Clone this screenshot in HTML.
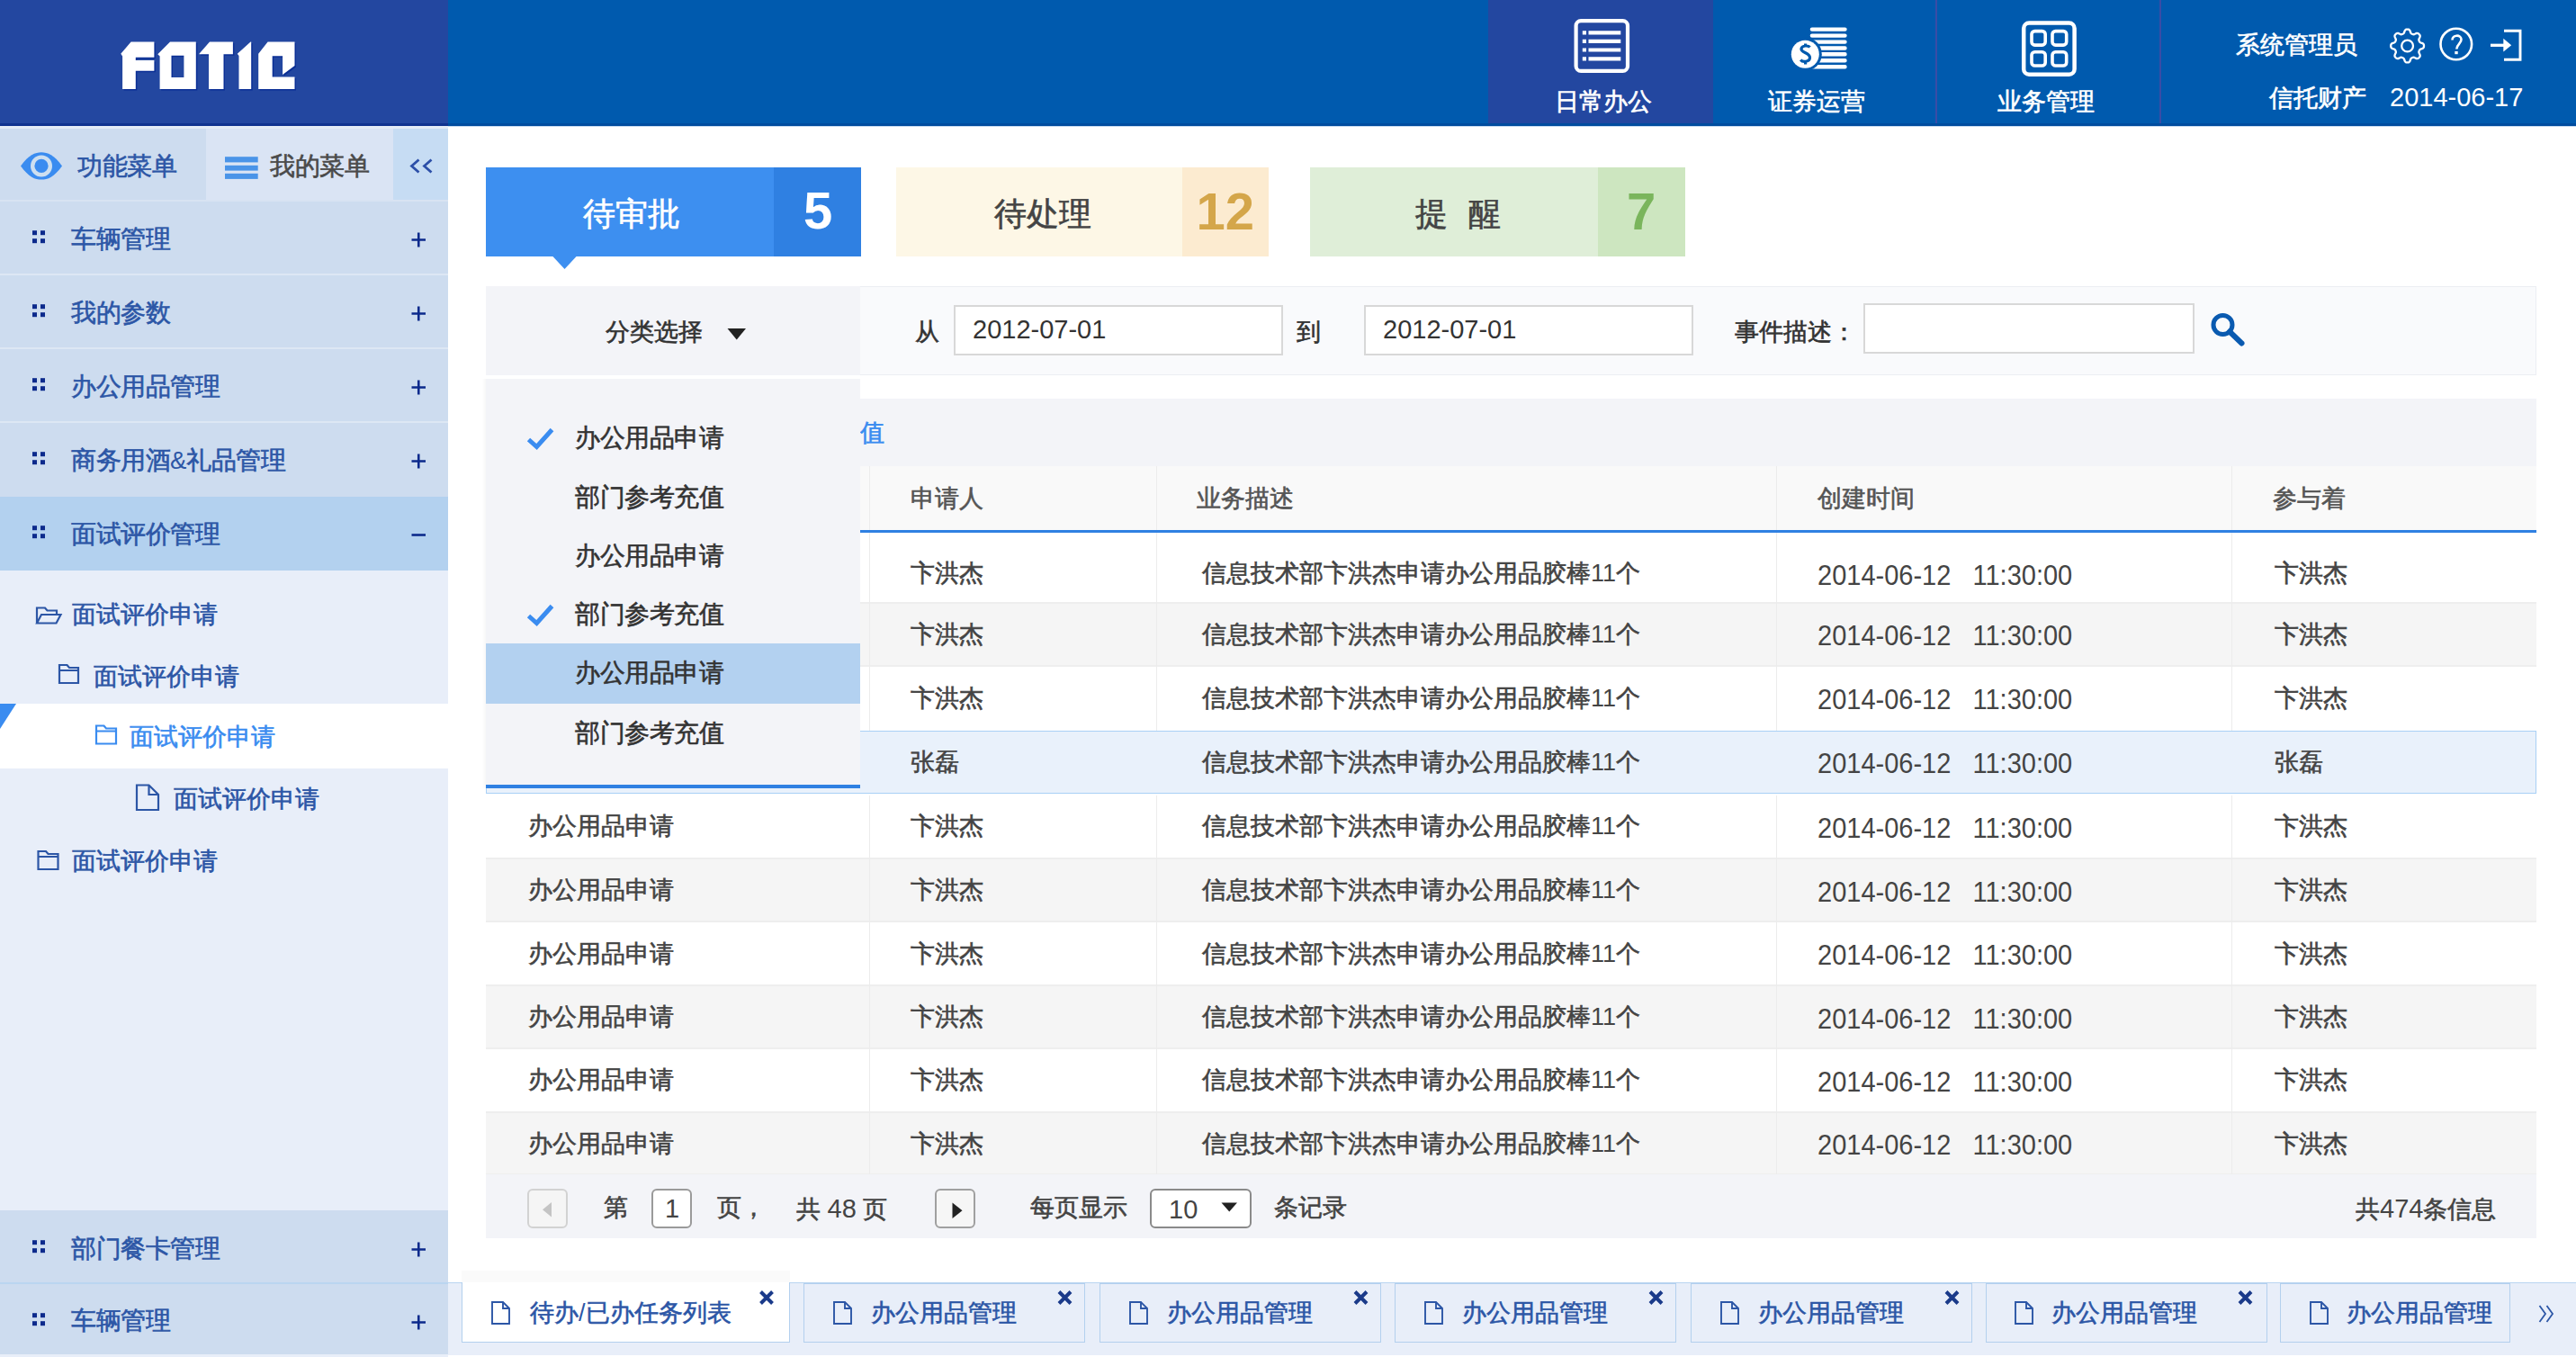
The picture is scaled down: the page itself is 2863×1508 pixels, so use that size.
<!DOCTYPE html>
<html><head><meta charset="utf-8">
<style>
*{box-sizing:border-box;margin:0;padding:0}
html,body{width:2863px;height:1508px;overflow:hidden;background:#fff}
body{position:relative;font-family:"Liberation Sans",sans-serif;color:#444;font-weight:500}
.a{position:absolute}
.t{position:absolute;white-space:nowrap;line-height:1}
/* header */
#logo{left:0;top:0;width:498px;height:140px;background:#2347a0;border-bottom:3px solid #10338f}
#hdr{left:498px;top:0;width:2365px;height:140px;background:#005aae;border-bottom:3px solid #004c9f}
.navact{left:1654px;top:0;width:250px;height:137px;background:#2347a0}
.nsep{top:0;width:2px;height:137px;background:#3a4ca6}
.navt{color:#fff;font-size:27px}
/* sidebar */
#side{left:0;top:143px;width:498px;height:1365px;background:#cddcef}
.mrow{left:0;width:498px;height:80px;background:#cddcef}
.msep{left:0;width:498px;height:2px;background:#dde7f4}
.mtxt{color:#2c56a6;font-size:27.5px}
.plus{color:#0c2a8c}
#sub{left:0;top:634px;width:498px;height:711px;background:#e8eef9}
.stxt{color:#2c56a6;font-size:27px}
.th{font-size:27px;color:#555}
.td{font-size:27px;color:#444}
.dt{font-size:29px;transform:scaleY(1.1);transform-origin:0 50%}
.dd{font-size:27.5px;color:#333}
.pg{font-size:27px;color:#444}
.tb{top:1426px;width:313px;height:66px;border:1.5px solid #b3d0ee;background:#e8eef9}
.tbt{font-size:27px;color:#2c56a6}
i{display:inline-block;width:1em;text-align:center;font-style:normal;-webkit-text-stroke:0.6px currentColor}
</style></head>
<body>
<!-- LOGO -->
<div id="logo" class="a">
<svg class="a" style="left:0;top:0" width="498" height="137" viewBox="0 0 498 137">
<g fill="#0b2f95" transform="translate(1.5,1.5)">
<path d="M145.6,46.5 L171.4,46.5 L171.4,63.8 L150.8,63.8 L150.8,66.9 L171.4,66.9 L171.4,78.7 L150.8,78.7 L150.8,98.9 L136.1,98.9 L136.1,62.5 L134.3,59.7 Z"/>
<path d="M189,46.5 L217.8,46.5 L217.8,98.9 L177.6,98.9 L177.6,62.5 L175.3,60.2 Z M190.5,61.7 L190.5,86 L204.4,86 L204.4,61.7 Z" fill-rule="evenodd"/>
<path d="M233,46.5 L258.9,46.5 L258.9,60.2 L248.5,60.2 L248.5,98.9 L232,98.9 L232,60.2 L221.4,60.2 L221.4,59.7 Z"/>
<path d="M278.5,46.5 L279.2,46.5 L279.2,98.9 L265.5,98.9 L265.5,62 L263.8,59.7 Z"/>
<path d="M297.6,46.5 L327.5,46.5 L327.5,73.1 L314.1,82.9 L314.1,62.3 L302.7,62.3 L302.7,85.5 L327.5,85.5 L327.5,98.9 L287.2,98.9 L287.2,62.3 L287.2,59.7 Z"/>
</g>
<g fill="#fff">
<path d="M145.6,46.5 L171.4,46.5 L171.4,63.8 L150.8,63.8 L150.8,66.9 L171.4,66.9 L171.4,78.7 L150.8,78.7 L150.8,98.9 L136.1,98.9 L136.1,62.5 L134.3,59.7 Z"/>
<path d="M189,46.5 L217.8,46.5 L217.8,98.9 L177.6,98.9 L177.6,62.5 L175.3,60.2 Z M190.5,61.7 L190.5,86 L204.4,86 L204.4,61.7 Z" fill-rule="evenodd"/>
<path d="M233,46.5 L258.9,46.5 L258.9,60.2 L248.5,60.2 L248.5,98.9 L232,98.9 L232,60.2 L221.4,60.2 L221.4,59.7 Z"/>
<path d="M278.5,46.5 L279.2,46.5 L279.2,98.9 L265.5,98.9 L265.5,62 L263.8,59.7 Z"/>
<path d="M297.6,46.5 L327.5,46.5 L327.5,73.1 L314.1,82.9 L314.1,62.3 L302.7,62.3 L302.7,85.5 L327.5,85.5 L327.5,98.9 L287.2,98.9 L287.2,62.3 L287.2,59.7 Z"/>
</g>
</svg>
</div>
<!-- HEADER -->
<div id="hdr" class="a"></div>
<div class="a navact"></div>
<div class="a nsep" style="left:2151px"></div>
<div class="a nsep" style="left:2400px"></div>
<svg class="a" style="left:1600px;top:0" width="1263" height="137" viewBox="1600 0 1263 137">
<g fill="none" stroke="#fff">
 <rect x="1751.6" y="23.1" width="57.4" height="55.8" rx="5.5" stroke-width="4.2"/>
 <g stroke-width="4.2">
  <path d="M1765.5,36.4H1801.3M1765.5,45.9H1801.3M1765.5,55.5H1801.3M1765.5,65.3H1801.3"/>
  <path d="M1758.8,36.4H1763M1758.8,45.9H1763M1758.8,55.5H1763M1758.8,65.3H1763"/>
 </g>
 <rect x="2249.2" y="25.5" width="56.4" height="57.2" rx="6" stroke-width="4.5"/>
 <g stroke-width="3.6">
  <rect x="2258" y="34.6" width="15.2" height="15.5" rx="3.5"/>
  <rect x="2281" y="34.6" width="15.7" height="15.5" rx="3.5"/>
  <rect x="2258" y="57.8" width="15.2" height="15.2" rx="3.5"/>
  <rect x="2281" y="57.8" width="15.7" height="15.2" rx="3.5"/>
 </g>
 <g stroke-width="4.4" stroke-linecap="round">
  <path d="M2013.9,32.6H2050.5M2013.9,39.6H2050.5M2013.9,46.6H2050.5M2013.9,53.5H2050.5M2013.9,60.2H2050.5M2013.9,67.2H2050.5M2013.9,74.2H2050.5"/>
 </g>
</g>
<circle cx="2006.3" cy="60.2" r="18.5" fill="#005aae"/>
<circle cx="2006.3" cy="60.2" r="15.5" fill="#fff"/>
<path d="M2011.5,52.5 C2010,50.5 2003,50 2002,54 C2001,58.5 2011.5,58.5 2011.5,64 C2011.5,69 2003.5,69.5 2001.2,66.5 M2006.6,48.5V51.5M2006.6,68.5V71.5" fill="none" stroke="#005aae" stroke-width="3.2"/>
<!-- gear -->
<g fill="none" stroke="#fff" stroke-width="2.6">
 <path d="M2675.60,32.60 L2676.18,32.63 L2676.75,32.72 L2677.31,32.91 L2677.84,33.26 L2678.31,33.87 L2678.70,34.76 L2679.01,35.74 L2679.32,36.52 L2679.66,37.03 L2680.03,37.36 L2680.42,37.60 L2680.83,37.79 L2681.24,37.96 L2681.66,38.11 L2682.11,38.22 L2682.61,38.25 L2683.21,38.13 L2683.98,37.80 L2684.89,37.33 L2685.79,36.97 L2686.56,36.87 L2687.19,37.00 L2687.71,37.26 L2688.18,37.60 L2688.61,37.99 L2689.00,38.42 L2689.34,38.89 L2689.60,39.41 L2689.73,40.04 L2689.63,40.81 L2689.27,41.71 L2688.80,42.62 L2688.47,43.39 L2688.35,43.99 L2688.38,44.49 L2688.49,44.94 L2688.64,45.36 L2688.81,45.77 L2689.00,46.18 L2689.24,46.57 L2689.57,46.94 L2690.08,47.28 L2690.86,47.59 L2691.84,47.90 L2692.73,48.29 L2693.34,48.76 L2693.69,49.29 L2693.88,49.85 L2693.97,50.42 L2694.00,51.00 L2693.97,51.58 L2693.88,52.15 L2693.69,52.71 L2693.34,53.24 L2692.73,53.71 L2691.84,54.10 L2690.86,54.41 L2690.08,54.72 L2689.57,55.06 L2689.24,55.43 L2689.00,55.82 L2688.81,56.23 L2688.64,56.64 L2688.49,57.06 L2688.38,57.51 L2688.35,58.01 L2688.47,58.61 L2688.80,59.38 L2689.27,60.29 L2689.63,61.19 L2689.73,61.96 L2689.60,62.59 L2689.34,63.11 L2689.00,63.58 L2688.61,64.01 L2688.18,64.40 L2687.71,64.74 L2687.19,65.00 L2686.56,65.13 L2685.79,65.03 L2684.89,64.67 L2683.98,64.20 L2683.21,63.87 L2682.61,63.75 L2682.11,63.78 L2681.66,63.89 L2681.24,64.04 L2680.83,64.21 L2680.42,64.40 L2680.03,64.64 L2679.66,64.97 L2679.32,65.48 L2679.01,66.26 L2678.70,67.24 L2678.31,68.13 L2677.84,68.74 L2677.31,69.09 L2676.75,69.28 L2676.18,69.37 L2675.60,69.40 L2675.02,69.37 L2674.45,69.28 L2673.89,69.09 L2673.36,68.74 L2672.89,68.13 L2672.50,67.24 L2672.19,66.26 L2671.88,65.48 L2671.54,64.97 L2671.17,64.64 L2670.78,64.40 L2670.37,64.21 L2669.96,64.04 L2669.54,63.89 L2669.09,63.78 L2668.59,63.75 L2667.99,63.87 L2667.22,64.20 L2666.31,64.67 L2665.41,65.03 L2664.64,65.13 L2664.01,65.00 L2663.49,64.74 L2663.02,64.40 L2662.59,64.01 L2662.20,63.58 L2661.86,63.11 L2661.60,62.59 L2661.47,61.96 L2661.57,61.19 L2661.93,60.29 L2662.40,59.38 L2662.73,58.61 L2662.85,58.01 L2662.82,57.51 L2662.71,57.06 L2662.56,56.64 L2662.39,56.23 L2662.20,55.82 L2661.96,55.43 L2661.63,55.06 L2661.12,54.72 L2660.34,54.41 L2659.36,54.10 L2658.47,53.71 L2657.86,53.24 L2657.51,52.71 L2657.32,52.15 L2657.23,51.58 L2657.20,51.00 L2657.23,50.42 L2657.32,49.85 L2657.51,49.29 L2657.86,48.76 L2658.47,48.29 L2659.36,47.90 L2660.34,47.59 L2661.12,47.28 L2661.63,46.94 L2661.96,46.57 L2662.20,46.18 L2662.39,45.77 L2662.56,45.36 L2662.71,44.94 L2662.82,44.49 L2662.85,43.99 L2662.73,43.39 L2662.40,42.62 L2661.93,41.71 L2661.57,40.81 L2661.47,40.04 L2661.60,39.41 L2661.86,38.89 L2662.20,38.42 L2662.59,37.99 L2663.02,37.60 L2663.49,37.26 L2664.01,37.00 L2664.64,36.87 L2665.41,36.97 L2666.31,37.33 L2667.22,37.80 L2667.99,38.13 L2668.59,38.25 L2669.09,38.22 L2669.54,38.11 L2669.96,37.96 L2670.37,37.79 L2670.78,37.60 L2671.17,37.36 L2671.54,37.03 L2671.88,36.52 L2672.19,35.74 L2672.50,34.76 L2672.89,33.87 L2673.36,33.26 L2673.89,32.91 L2674.45,32.72 L2675.02,32.63Z" stroke-width="2.3"/>
 <circle cx="2675.6" cy="51" r="6.4" stroke-width="2.3"/>
 <circle cx="2729.8" cy="49" r="17.3"/>
 <path d="M2725.5,44.5 C2725.5,38.5 2735,38 2735.5,43.5 C2736,48 2730.5,49 2730.3,54.5"/>
 <path d="M2783,34.3H2801V66.3H2783" stroke-width="2.9"/>
 <path d="M2768,50.3H2785" stroke-width="3.3"/>
</g>
<path d="M2782.3,42.8L2791.2,50.3L2782.3,57.6Z" fill="#fff"/>
<rect x="2728.3" y="57" width="3.4" height="3.2" fill="#fff"/>
</svg>
<div class="t navt" style="left:1728px;top:100px"><i>日</i><i>常</i><i>办</i><i>公</i></div>
<div class="t navt" style="left:1965px;top:100px"><i>证</i><i>券</i><i>运</i><i>营</i></div>
<div class="t navt" style="left:2220px;top:100px"><i>业</i><i>务</i><i>管</i><i>理</i></div>
<div class="t navt" style="left:2485px;top:37px"><i>系</i><i>统</i><i>管</i><i>理</i><i>员</i></div>
<div class="t navt" style="left:2522px;top:96px"><i>信</i><i>托</i><i>财</i><i>产</i></div>
<div class="t navt" style="left:2656px;top:94px;font-size:29px">2014-06-17</div>

<div class="a" style="left:498px;top:140px;width:2365px;height:1px;background:#c9dcf1"></div>
<!-- SIDEBAR -->
<div id="side" class="a"></div>
<div class="a" style="left:0;top:140px;width:498px;height:3px;background:#e4ecf6"></div>
<div class="a" style="left:229px;top:143px;width:208px;height:80px;background:#dae4f4"></div>
<div class="a" style="left:437px;top:143px;width:61px;height:79px;background:#c6dcf3"></div>
<div class="a" style="left:0;top:222px;width:498px;height:2px;background:#d8e3f2"></div>
<svg class="a" style="left:0;top:143px" width="498" height="80" viewBox="0 143 498 80">
 <path d="M23,184.4 C32,172 39,169.2 46,169.2 C53,169.2 60,172 69,184.4 C60,196.8 53,199.6 46,199.6 C39,199.6 32,196.8 23,184.4Z" fill="#3a8cf0"/>
 <circle cx="46" cy="184.4" r="12" fill="#cddff0"/>
 <circle cx="46" cy="184.4" r="7.6" fill="#3a8cf0"/>
 <g fill="#4a94e8"><rect x="250" y="174.2" width="36.7" height="6.2"/><rect x="250" y="183.8" width="36.7" height="5.8"/><rect x="250" y="192.8" width="36.7" height="6.1"/></g>
 <path d="M465.5,177.5L457.5,184.5L465.5,191.5M479.5,177.5L471.5,184.5L479.5,191.5" fill="none" stroke="#2c4fa8" stroke-width="2.8"/>
</svg>
<div class="t mtxt" style="left:86px;top:171px"><i>功</i><i>能</i><i>菜</i><i>单</i></div>
<div class="t mtxt" style="left:300px;top:171px;color:#4a4a4a"><i>我</i><i>的</i><i>菜</i><i>单</i></div>

<!-- menu rows -->
<div class="a msep" style="top:304px"></div>
<div class="a msep" style="top:386px"></div>
<div class="a msep" style="top:468px"></div>
<div class="a" style="left:0;top:552px;width:498px;height:82px;background:#b3d1ef"></div>
<div id="sub" class="a"></div>
<div class="a" style="left:0;top:782px;width:498px;height:72px;background:#fff"></div>
<svg class="a" style="left:0;top:782px" width="20" height="30"><path d="M0,0H18L0,28Z" fill="#3a8cf0"/></svg>
<div class="a" style="left:0;top:1345px;width:498px;height:163px;background:#cddcef"></div>
<div class="a" style="left:0;top:1425px;width:498px;height:2px;background:#bad5f0"></div>
<div class="a" style="left:0;top:1505px;width:498px;height:3px;background:#e8eef9"></div>

<svg class="a" style="left:0;top:0" width="498" height="1508" viewBox="0 0 498 1508">
 <defs>
  <g id="dt"><rect x="0" y="0" width="5" height="5"/><rect x="9" y="0" width="5" height="5"/><rect x="0" y="9" width="5" height="5"/><rect x="9" y="9" width="5" height="5"/></g>
  <path id="pl" d="M0,8.5H15.5M7.75,0.5V16.5" fill="none" stroke="#0c2a8c" stroke-width="2.6"/>
 </defs>
 <g fill="#0c2a8c">
  <use href="#dt" x="36" y="256.2"/>
  <use href="#dt" x="36" y="338.2"/>
  <use href="#dt" x="36" y="420.2"/>
  <use href="#dt" x="36" y="502.2"/>
  <use href="#dt" x="36" y="584.2"/>
  <use href="#dt" x="36" y="1378.2"/>
  <use href="#dt" x="36" y="1459.2"/>
 </g>
 <use href="#pl" x="457.5" y="258"/>
 <use href="#pl" x="457.5" y="340"/>
 <use href="#pl" x="457.5" y="422"/>
 <use href="#pl" x="457.5" y="504"/>
 <path d="M457.5,594.5H473" stroke="#0c2a8c" stroke-width="2.6"/>
 <use href="#pl" x="457.5" y="1380"/>
 <use href="#pl" x="457.5" y="1461"/>
 <!-- tree icons -->
 <g fill="none" stroke="#2c56a6" stroke-width="2.2">
  <path d="M41,692.5V675.5H50L52.5,678.5H63V683M41,692.5L46,683H67.5L62.5,692.5Z"/>
  <path d="M66,759V739H74.5L77,742H87V759Z M66,745H87"/>
  <path d="M42.5,966V946H51L53.5,949H64.5V966Z M42.5,952H64.5"/>
  <path d="M152,900V872.5H165.5L176,883V900Z M165.5,872.5V883H176"/>
 </g>
 <path d="M107,826.5V806.5H115.5L118,809.5H129V826.5Z M107,812.5H129" fill="none" stroke="#3a8cf0" stroke-width="2.2"/>
</svg>
<div class="t mtxt" style="left:79px;top:252px"><i>车</i><i>辆</i><i>管</i><i>理</i></div>
<div class="t mtxt" style="left:79px;top:334px"><i>我</i><i>的</i><i>参</i><i>数</i></div>
<div class="t mtxt" style="left:79px;top:416px"><i>办</i><i>公</i><i>用</i><i>品</i><i>管</i><i>理</i></div>
<div class="t mtxt" style="left:79px;top:498px"><i>商</i><i>务</i><i>用</i><i>酒</i>&amp;<i>礼</i><i>品</i><i>管</i><i>理</i></div>
<div class="t mtxt" style="left:79px;top:580px"><i>面</i><i>试</i><i>评</i><i>价</i><i>管</i><i>理</i></div>
<div class="t stxt" style="left:80px;top:670px"><i>面</i><i>试</i><i>评</i><i>价</i><i>申</i><i>请</i></div>
<div class="t stxt" style="left:104px;top:739px"><i>面</i><i>试</i><i>评</i><i>价</i><i>申</i><i>请</i></div>
<div class="t stxt" style="left:144px;top:806px;color:#3a8cf0"><i>面</i><i>试</i><i>评</i><i>价</i><i>申</i><i>请</i></div>
<div class="t stxt" style="left:193px;top:875px"><i>面</i><i>试</i><i>评</i><i>价</i><i>申</i><i>请</i></div>
<div class="t stxt" style="left:80px;top:944px"><i>面</i><i>试</i><i>评</i><i>价</i><i>申</i><i>请</i></div>
<div class="t mtxt" style="left:79px;top:1374px"><i>部</i><i>门</i><i>餐</i><i>卡</i><i>管</i><i>理</i></div>
<div class="t mtxt" style="left:79px;top:1454px"><i>车</i><i>辆</i><i>管</i><i>理</i></div>

<!-- MAIN -->
<!-- cards -->
<div class="a" style="left:540px;top:186px;width:321px;height:99px;background:#3d8ff0"></div>
<div class="a" style="left:860px;top:186px;width:97px;height:99px;background:#2f80e2"></div>
<svg class="a" style="left:612px;top:284px" width="32" height="17"><path d="M1.5,0H29.5L15.5,15Z" fill="#3d8ff0"/></svg>
<div class="t" style="left:648px;top:220px;font-size:36px;color:#fff"><i>待</i><i>审</i><i>批</i></div>
<div class="t" style="left:893px;top:205px;font-size:58px;color:#fff;font-weight:bold">5</div>

<div class="a" style="left:996px;top:186px;width:318px;height:99px;background:#fdf7e6"></div>
<div class="a" style="left:1314px;top:186px;width:96px;height:99px;background:#fcebd0"></div>
<div class="t" style="left:1105px;top:220px;font-size:36px;color:#444"><i>待</i><i>处</i><i>理</i></div>
<div class="t" style="left:1329.5px;top:206px;font-size:58px;color:#d4a64a;font-weight:bold">12</div>

<div class="a" style="left:1456px;top:186px;width:321px;height:99px;background:#dfeed8"></div>
<div class="a" style="left:1776px;top:186px;width:97px;height:99px;background:#cde6c0"></div>
<div class="t" style="left:1573px;top:220px;font-size:36px;color:#444"><i>提</i><span style="margin-left:23px"><i>醒</i></span></div>
<div class="t" style="left:1808px;top:206px;font-size:58px;color:#7ab55c;font-weight:bold">7</div>

<!-- filter bar -->
<div class="a" style="left:540px;top:318px;width:2279px;height:99px;background:#f9fafc;border:1px solid #eceef3"></div>
<div class="a" style="left:540px;top:318px;width:416px;height:99px;background:#f3f4f8"></div>
<div class="t fl" style="left:673px;top:356px;font-size:27px;color:#333"><i>分</i><i>类</i><i>选</i><i>择</i></div>
<svg class="a" style="left:806px;top:363px" width="26" height="17"><path d="M2.5,2H23L12.75,14.5Z" fill="#222"/></svg>
<div class="t" style="left:1017px;top:356px;font-size:27px;color:#333"><i>从</i></div>
<div class="a" style="left:1060px;top:339px;width:366px;height:56px;background:#fff;border:2px solid #d8d8d8"></div>
<div class="t" style="left:1081px;top:352px;font-size:29px;color:#333">2012-07-01</div>
<div class="t" style="left:1441px;top:356px;font-size:27px;color:#333"><i>到</i></div>
<div class="a" style="left:1516px;top:339px;width:366px;height:56px;background:#fff;border:2px solid #d8d8d8"></div>
<div class="t" style="left:1537px;top:352px;font-size:29px;color:#333">2012-07-01</div>
<div class="t" style="left:1928px;top:356px;font-size:27px;color:#333"><i>事</i><i>件</i><i>描</i><i>述</i><i>：</i></div>
<div class="a" style="left:2071px;top:337px;width:368px;height:56px;background:#fff;border:2px solid #d8d8d8"></div>
<svg class="a" style="left:2455px;top:346px" width="42" height="40"><circle cx="15.5" cy="15" r="10.5" fill="none" stroke="#0a5ab0" stroke-width="5"/><path d="M23,22.5L36.5,35.5" stroke="#0a5ab0" stroke-width="6" stroke-linecap="round"/></svg>

<!-- TABLE -->
<!-- TABLE_START -->
<div class="a" style="left:540px;top:443px;width:2279px;height:75px;background:#f3f4f8"></div>
<div class="t" style="left:956px;top:468px;font-size:27px;color:#3a8cf0"><i>值</i></div>
<div class="a" style="left:540px;top:518px;width:2279px;height:71px;background:#f9f9f9"></div>
<div class="a" style="left:540px;top:589px;width:2279px;height:3px;background:#2f80e2"></div>
<div class="a" style="left:540px;top:592px;width:2279px;height:77.6px;background:#fff"></div>
<div class="a" style="left:540px;top:669.6px;width:2279px;height:70.4px;background:#f5f5f5"></div>
<div class="a" style="left:540px;top:740px;width:2279px;height:71.8px;background:#fff"></div>
<div class="a" style="left:540px;top:811.8px;width:2279px;height:70.2px;background:#e9f1fb"></div>
<div class="a" style="left:540px;top:882px;width:2279px;height:72.4px;background:#fff"></div>
<div class="a" style="left:540px;top:954.4px;width:2279px;height:69.9px;background:#f5f5f5"></div>
<div class="a" style="left:540px;top:1024.3px;width:2279px;height:70.7px;background:#fff"></div>
<div class="a" style="left:540px;top:1095px;width:2279px;height:69.9px;background:#f5f5f5"></div>
<div class="a" style="left:540px;top:1164.9px;width:2279px;height:71.0px;background:#fff"></div>
<div class="a" style="left:540px;top:1235.9px;width:2279px;height:69.1px;background:#f5f5f5"></div>
<div class="a" style="left:540px;top:811.8px;width:2279px;height:70.2px;border:1.5px solid #a9d0f5"></div>
<div class="a" style="left:540px;top:668.6px;width:2279px;height:2px;background:#eeeeee"></div>
<div class="a" style="left:540px;top:739px;width:2279px;height:2px;background:#eeeeee"></div>
<div class="a" style="left:540px;top:953.4px;width:2279px;height:2px;background:#eeeeee"></div>
<div class="a" style="left:540px;top:1023.3px;width:2279px;height:2px;background:#eeeeee"></div>
<div class="a" style="left:540px;top:1094px;width:2279px;height:2px;background:#eeeeee"></div>
<div class="a" style="left:540px;top:1163.9px;width:2279px;height:2px;background:#eeeeee"></div>
<div class="a" style="left:540px;top:1234.9px;width:2279px;height:2px;background:#eeeeee"></div>
<div class="a" style="left:540px;top:1304px;width:2279px;height:2px;background:#eeeeee"></div>
<div class="a" style="left:966px;top:518px;width:1px;height:71px;background:#ececec"></div>
<div class="a" style="left:966px;top:592px;width:1px;height:77.6px;background:#ececec"></div>
<div class="a" style="left:966px;top:669.6px;width:1px;height:70.4px;background:#ececec"></div>
<div class="a" style="left:966px;top:740px;width:1px;height:71.8px;background:#ececec"></div>
<div class="a" style="left:966px;top:883.5px;width:1px;height:72.4px;background:#ececec"></div>
<div class="a" style="left:966px;top:954.4px;width:1px;height:69.9px;background:#ececec"></div>
<div class="a" style="left:966px;top:1024.3px;width:1px;height:70.7px;background:#ececec"></div>
<div class="a" style="left:966px;top:1095px;width:1px;height:69.9px;background:#ececec"></div>
<div class="a" style="left:966px;top:1164.9px;width:1px;height:71.0px;background:#ececec"></div>
<div class="a" style="left:966px;top:1235.9px;width:1px;height:69.1px;background:#ececec"></div>
<div class="a" style="left:1285px;top:518px;width:1px;height:71px;background:#ececec"></div>
<div class="a" style="left:1285px;top:592px;width:1px;height:77.6px;background:#ececec"></div>
<div class="a" style="left:1285px;top:669.6px;width:1px;height:70.4px;background:#ececec"></div>
<div class="a" style="left:1285px;top:740px;width:1px;height:71.8px;background:#ececec"></div>
<div class="a" style="left:1285px;top:883.5px;width:1px;height:72.4px;background:#ececec"></div>
<div class="a" style="left:1285px;top:954.4px;width:1px;height:69.9px;background:#ececec"></div>
<div class="a" style="left:1285px;top:1024.3px;width:1px;height:70.7px;background:#ececec"></div>
<div class="a" style="left:1285px;top:1095px;width:1px;height:69.9px;background:#ececec"></div>
<div class="a" style="left:1285px;top:1164.9px;width:1px;height:71.0px;background:#ececec"></div>
<div class="a" style="left:1285px;top:1235.9px;width:1px;height:69.1px;background:#ececec"></div>
<div class="a" style="left:1974px;top:518px;width:1px;height:71px;background:#ececec"></div>
<div class="a" style="left:1974px;top:592px;width:1px;height:77.6px;background:#ececec"></div>
<div class="a" style="left:1974px;top:669.6px;width:1px;height:70.4px;background:#ececec"></div>
<div class="a" style="left:1974px;top:740px;width:1px;height:71.8px;background:#ececec"></div>
<div class="a" style="left:1974px;top:883.5px;width:1px;height:72.4px;background:#ececec"></div>
<div class="a" style="left:1974px;top:954.4px;width:1px;height:69.9px;background:#ececec"></div>
<div class="a" style="left:1974px;top:1024.3px;width:1px;height:70.7px;background:#ececec"></div>
<div class="a" style="left:1974px;top:1095px;width:1px;height:69.9px;background:#ececec"></div>
<div class="a" style="left:1974px;top:1164.9px;width:1px;height:71.0px;background:#ececec"></div>
<div class="a" style="left:1974px;top:1235.9px;width:1px;height:69.1px;background:#ececec"></div>
<div class="a" style="left:2480px;top:518px;width:1px;height:71px;background:#ececec"></div>
<div class="a" style="left:2480px;top:592px;width:1px;height:77.6px;background:#ececec"></div>
<div class="a" style="left:2480px;top:669.6px;width:1px;height:70.4px;background:#ececec"></div>
<div class="a" style="left:2480px;top:740px;width:1px;height:71.8px;background:#ececec"></div>
<div class="a" style="left:2480px;top:883.5px;width:1px;height:72.4px;background:#ececec"></div>
<div class="a" style="left:2480px;top:954.4px;width:1px;height:69.9px;background:#ececec"></div>
<div class="a" style="left:2480px;top:1024.3px;width:1px;height:70.7px;background:#ececec"></div>
<div class="a" style="left:2480px;top:1095px;width:1px;height:69.9px;background:#ececec"></div>
<div class="a" style="left:2480px;top:1164.9px;width:1px;height:71.0px;background:#ececec"></div>
<div class="a" style="left:2480px;top:1235.9px;width:1px;height:69.1px;background:#ececec"></div>
<div class="a" style="left:540px;top:1305px;width:2279px;height:71.4px;background:#f3f4f8"></div>
<div class="t th" style="left:1012px;top:541px"><i>申</i><i>请</i><i>人</i></div>
<div class="t th" style="left:1330px;top:541px"><i>业</i><i>务</i><i>描</i><i>述</i></div>
<div class="t th" style="left:2020px;top:541px"><i>创</i><i>建</i><i>时</i><i>间</i></div>
<div class="t th" style="left:2526px;top:541px"><i>参</i><i>与</i><i>着</i></div>
<div class="t td" style="left:587px;top:624.0px"><i>办</i><i>公</i><i>用</i><i>品</i><i>申</i><i>请</i></div>
<div class="t td" style="left:1012px;top:624.0px"><i>卞</i><i>洪</i><i>杰</i></div>
<div class="t td" style="left:1336px;top:624.0px"><i>信</i><i>息</i><i>技</i><i>术</i><i>部</i><i>卞</i><i>洪</i><i>杰</i><i>申</i><i>请</i><i>办</i><i>公</i><i>用</i><i>品</i><i>胶</i><i>棒</i>11<i>个</i></div>
<div class="t td dt" style="left:2020px;top:624.5px">2014-06-12 &nbsp;&nbsp;11:30:00</div>
<div class="t td" style="left:2528px;top:624.0px"><i>卞</i><i>洪</i><i>杰</i></div>
<div class="t td" style="left:587px;top:691.8px"><i>办</i><i>公</i><i>用</i><i>品</i><i>申</i><i>请</i></div>
<div class="t td" style="left:1012px;top:691.8px"><i>卞</i><i>洪</i><i>杰</i></div>
<div class="t td" style="left:1336px;top:691.8px"><i>信</i><i>息</i><i>技</i><i>术</i><i>部</i><i>卞</i><i>洪</i><i>杰</i><i>申</i><i>请</i><i>办</i><i>公</i><i>用</i><i>品</i><i>胶</i><i>棒</i>11<i>个</i></div>
<div class="t td dt" style="left:2020px;top:692.3px">2014-06-12 &nbsp;&nbsp;11:30:00</div>
<div class="t td" style="left:2528px;top:691.8px"><i>卞</i><i>洪</i><i>杰</i></div>
<div class="t td" style="left:587px;top:762.9px"><i>办</i><i>公</i><i>用</i><i>品</i><i>申</i><i>请</i></div>
<div class="t td" style="left:1012px;top:762.9px"><i>卞</i><i>洪</i><i>杰</i></div>
<div class="t td" style="left:1336px;top:762.9px"><i>信</i><i>息</i><i>技</i><i>术</i><i>部</i><i>卞</i><i>洪</i><i>杰</i><i>申</i><i>请</i><i>办</i><i>公</i><i>用</i><i>品</i><i>胶</i><i>棒</i>11<i>个</i></div>
<div class="t td dt" style="left:2020px;top:763.4px">2014-06-12 &nbsp;&nbsp;11:30:00</div>
<div class="t td" style="left:2528px;top:762.9px"><i>卞</i><i>洪</i><i>杰</i></div>
<div class="t td" style="left:587px;top:833.9px"><i>办</i><i>公</i><i>用</i><i>品</i><i>申</i><i>请</i></div>
<div class="t td" style="left:1012px;top:833.9px"><i>张</i><i>磊</i></div>
<div class="t td" style="left:1336px;top:833.9px"><i>信</i><i>息</i><i>技</i><i>术</i><i>部</i><i>卞</i><i>洪</i><i>杰</i><i>申</i><i>请</i><i>办</i><i>公</i><i>用</i><i>品</i><i>胶</i><i>棒</i>11<i>个</i></div>
<div class="t td dt" style="left:2020px;top:834.4px">2014-06-12 &nbsp;&nbsp;11:30:00</div>
<div class="t td" style="left:2528px;top:833.9px"><i>张</i><i>磊</i></div>
<div class="t td" style="left:587px;top:905.2px"><i>办</i><i>公</i><i>用</i><i>品</i><i>申</i><i>请</i></div>
<div class="t td" style="left:1012px;top:905.2px"><i>卞</i><i>洪</i><i>杰</i></div>
<div class="t td" style="left:1336px;top:905.2px"><i>信</i><i>息</i><i>技</i><i>术</i><i>部</i><i>卞</i><i>洪</i><i>杰</i><i>申</i><i>请</i><i>办</i><i>公</i><i>用</i><i>品</i><i>胶</i><i>棒</i>11<i>个</i></div>
<div class="t td dt" style="left:2020px;top:905.7px">2014-06-12 &nbsp;&nbsp;11:30:00</div>
<div class="t td" style="left:2528px;top:905.2px"><i>卞</i><i>洪</i><i>杰</i></div>
<div class="t td" style="left:587px;top:976.3px"><i>办</i><i>公</i><i>用</i><i>品</i><i>申</i><i>请</i></div>
<div class="t td" style="left:1012px;top:976.3px"><i>卞</i><i>洪</i><i>杰</i></div>
<div class="t td" style="left:1336px;top:976.3px"><i>信</i><i>息</i><i>技</i><i>术</i><i>部</i><i>卞</i><i>洪</i><i>杰</i><i>申</i><i>请</i><i>办</i><i>公</i><i>用</i><i>品</i><i>胶</i><i>棒</i>11<i>个</i></div>
<div class="t td dt" style="left:2020px;top:976.8px">2014-06-12 &nbsp;&nbsp;11:30:00</div>
<div class="t td" style="left:2528px;top:976.3px"><i>卞</i><i>洪</i><i>杰</i></div>
<div class="t td" style="left:587px;top:1046.7px"><i>办</i><i>公</i><i>用</i><i>品</i><i>申</i><i>请</i></div>
<div class="t td" style="left:1012px;top:1046.7px"><i>卞</i><i>洪</i><i>杰</i></div>
<div class="t td" style="left:1336px;top:1046.7px"><i>信</i><i>息</i><i>技</i><i>术</i><i>部</i><i>卞</i><i>洪</i><i>杰</i><i>申</i><i>请</i><i>办</i><i>公</i><i>用</i><i>品</i><i>胶</i><i>棒</i>11<i>个</i></div>
<div class="t td dt" style="left:2020px;top:1047.2px">2014-06-12 &nbsp;&nbsp;11:30:00</div>
<div class="t td" style="left:2528px;top:1046.7px"><i>卞</i><i>洪</i><i>杰</i></div>
<div class="t td" style="left:587px;top:1117.0px"><i>办</i><i>公</i><i>用</i><i>品</i><i>申</i><i>请</i></div>
<div class="t td" style="left:1012px;top:1117.0px"><i>卞</i><i>洪</i><i>杰</i></div>
<div class="t td" style="left:1336px;top:1117.0px"><i>信</i><i>息</i><i>技</i><i>术</i><i>部</i><i>卞</i><i>洪</i><i>杰</i><i>申</i><i>请</i><i>办</i><i>公</i><i>用</i><i>品</i><i>胶</i><i>棒</i>11<i>个</i></div>
<div class="t td dt" style="left:2020px;top:1117.5px">2014-06-12 &nbsp;&nbsp;11:30:00</div>
<div class="t td" style="left:2528px;top:1117.0px"><i>卞</i><i>洪</i><i>杰</i></div>
<div class="t td" style="left:587px;top:1187.4px"><i>办</i><i>公</i><i>用</i><i>品</i><i>申</i><i>请</i></div>
<div class="t td" style="left:1012px;top:1187.4px"><i>卞</i><i>洪</i><i>杰</i></div>
<div class="t td" style="left:1336px;top:1187.4px"><i>信</i><i>息</i><i>技</i><i>术</i><i>部</i><i>卞</i><i>洪</i><i>杰</i><i>申</i><i>请</i><i>办</i><i>公</i><i>用</i><i>品</i><i>胶</i><i>棒</i>11<i>个</i></div>
<div class="t td dt" style="left:2020px;top:1187.9px">2014-06-12 &nbsp;&nbsp;11:30:00</div>
<div class="t td" style="left:2528px;top:1187.4px"><i>卞</i><i>洪</i><i>杰</i></div>
<div class="t td" style="left:587px;top:1257.5px"><i>办</i><i>公</i><i>用</i><i>品</i><i>申</i><i>请</i></div>
<div class="t td" style="left:1012px;top:1257.5px"><i>卞</i><i>洪</i><i>杰</i></div>
<div class="t td" style="left:1336px;top:1257.5px"><i>信</i><i>息</i><i>技</i><i>术</i><i>部</i><i>卞</i><i>洪</i><i>杰</i><i>申</i><i>请</i><i>办</i><i>公</i><i>用</i><i>品</i><i>胶</i><i>棒</i>11<i>个</i></div>
<div class="t td dt" style="left:2020px;top:1258.0px">2014-06-12 &nbsp;&nbsp;11:30:00</div>
<div class="t td" style="left:2528px;top:1257.5px"><i>卞</i><i>洪</i><i>杰</i></div>
<!-- TABLE_END -->
<!-- REST_START -->
<!-- dropdown -->
<div class="a" style="left:536px;top:421px;width:4px;height:455px;background:linear-gradient(to right,rgba(0,0,0,0),rgba(0,0,0,0.03))"></div>
<div class="a" style="left:540px;top:421px;width:416px;height:455px;background:#f3f4f8"></div>
<div class="a" style="left:540px;top:714.5px;width:416px;height:67.5px;background:#b3d1f0"></div>
<div class="a" style="left:540px;top:871.5px;width:416px;height:4px;background:#2f80e2"></div>
<svg class="a" style="left:584px;top:470px" width="34" height="240"><path d="M3.5,18.5L12.5,26.5L29.5,7.5M3.5,214.5L12.5,222.5L29.5,203.5" fill="none" stroke="#3a8cf0" stroke-width="5"/></svg>
<div class="t dd" style="left:639px;top:473px"><i>办</i><i>公</i><i>用</i><i>品</i><i>申</i><i>请</i></div>
<div class="t dd" style="left:639px;top:539px"><i>部</i><i>门</i><i>参</i><i>考</i><i>充</i><i>值</i></div>
<div class="t dd" style="left:639px;top:604px"><i>办</i><i>公</i><i>用</i><i>品</i><i>申</i><i>请</i></div>
<div class="t dd" style="left:639px;top:669px"><i>部</i><i>门</i><i>参</i><i>考</i><i>充</i><i>值</i></div>
<div class="t dd" style="left:639px;top:734px"><i>办</i><i>公</i><i>用</i><i>品</i><i>申</i><i>请</i></div>
<div class="t dd" style="left:639px;top:801px"><i>部</i><i>门</i><i>参</i><i>考</i><i>充</i><i>值</i></div>

<!-- pagination -->
<div class="a" style="left:585.5px;top:1321px;width:45px;height:44px;border:2px solid #d2d2d2;border-radius:6px;background:#f5f5f5"></div>
<svg class="a" style="left:600px;top:1334px" width="16" height="22"><path d="M13,2V18.5L3,10.25Z" fill="#c4c4c4"/></svg>
<div class="t pg" style="left:671px;top:1329px"><i>第</i></div>
<div class="a" style="left:724px;top:1321px;width:45px;height:44px;border:2px solid #9a9a9a;border-radius:6px;background:#fff"></div>
<div class="t pg" style="left:739px;top:1329px;font-size:29px">1</div>
<div class="t pg" style="left:797px;top:1329px"><i>页</i><i>，</i></div>
<div class="t pg" style="left:885px;top:1329px"><i>共</i>&nbsp;<span style="font-size:29px">48</span>&nbsp;<i>页</i></div>
<div class="a" style="left:1038.5px;top:1321px;width:45px;height:44px;border:2px solid #a0a0a0;border-radius:6px;background:#f6f6f6"></div>
<svg class="a" style="left:1054px;top:1334px" width="20" height="22"><path d="M4.5,2.5V20L15.5,11.25Z" fill="#222"/></svg>
<div class="t pg" style="left:1145px;top:1329px"><i>每</i><i>页</i><i>显</i><i>示</i></div>
<div class="a" style="left:1278px;top:1321px;width:113px;height:44px;border:2px solid #8a8a8a;border-radius:6px;background:#fff"></div>
<div class="t pg" style="left:1299px;top:1330px;font-size:29px">10</div>
<svg class="a" style="left:1355px;top:1334px" width="24" height="16"><path d="M2.5,2.5H20L11.25,12.5Z" fill="#222"/></svg>
<div class="t pg" style="left:1416px;top:1329px"><i>条</i><i>记</i><i>录</i></div>
<div class="t pg" style="left:2618px;top:1329px"><i>共</i><span style="font-size:29px">474</span><i>条</i><i>信</i><i>息</i></div>

<!-- bottom tab bar -->
<div class="a" style="left:498px;top:1425px;width:2365px;height:81px;background:#e8eef9;border-top:1px solid #b8d4f0"></div>
<div class="a" style="left:513px;top:1412px;width:365px;height:14px;background:#fafafa"></div>
<div class="a" style="left:513px;top:1425px;width:365px;height:67px;background:#fff;border:1.5px solid #b3d0ee;border-top:none"></div>
<div class="a tb" style="left:893px"></div>
<div class="a tb" style="left:1222px"></div>
<div class="a tb" style="left:1550px"></div>
<div class="a tb" style="left:1879px"></div>
<div class="a tb" style="left:2207px"></div>
<div class="a tb" style="left:2534px;width:256px"></div>
<svg class="a" style="left:498px;top:1425px" width="2365" height="83" viewBox="498 1425 2365 83">
 <defs>
  <path id="doc" d="M0,24V0H12L19,7V24Z M12,0V7H19" fill="none" stroke="#2c56a6" stroke-width="1.9"/>
  <path id="cls" d="M0,0L13,13M13,0L0,13" fill="none" stroke="#1a3a8a" stroke-width="4"/>
 </defs>
 <use href="#doc" x="547" y="1447"/>
 <use href="#doc" x="927" y="1447"/>
 <use href="#doc" x="1256" y="1447"/>
 <use href="#doc" x="1584" y="1447"/>
 <use href="#doc" x="1913" y="1447"/>
 <use href="#doc" x="2240" y="1447"/>
 <use href="#doc" x="2568" y="1447"/>
 <use href="#cls" x="845.5" y="1435.5"/>
 <use href="#cls" x="1177" y="1435.5"/>
 <use href="#cls" x="1506" y="1435.5"/>
 <use href="#cls" x="1834" y="1435.5"/>
 <use href="#cls" x="2163" y="1435.5"/>
 <use href="#cls" x="2489" y="1435.5"/>
 <path d="M2822.5,1451L2829,1460L2822.5,1469M2830.5,1451L2837,1460L2830.5,1469" fill="none" stroke="#2c56a6" stroke-width="1.8"/>
</svg>
<div class="t tbt" style="left:589px;top:1446px"><i>待</i><i>办</i>/<i>已</i><i>办</i><i>任</i><i>务</i><i>列</i><i>表</i></div>
<div class="t tbt" style="left:968px;top:1446px"><i>办</i><i>公</i><i>用</i><i>品</i><i>管</i><i>理</i></div>
<div class="t tbt" style="left:1297px;top:1446px"><i>办</i><i>公</i><i>用</i><i>品</i><i>管</i><i>理</i></div>
<div class="t tbt" style="left:1625px;top:1446px"><i>办</i><i>公</i><i>用</i><i>品</i><i>管</i><i>理</i></div>
<div class="t tbt" style="left:1954px;top:1446px"><i>办</i><i>公</i><i>用</i><i>品</i><i>管</i><i>理</i></div>
<div class="t tbt" style="left:2280px;top:1446px"><i>办</i><i>公</i><i>用</i><i>品</i><i>管</i><i>理</i></div>
<div class="t tbt" style="left:2608px;top:1446px"><i>办</i><i>公</i><i>用</i><i>品</i><i>管</i><i>理</i></div>

<!-- REST_END -->

</body></html>
